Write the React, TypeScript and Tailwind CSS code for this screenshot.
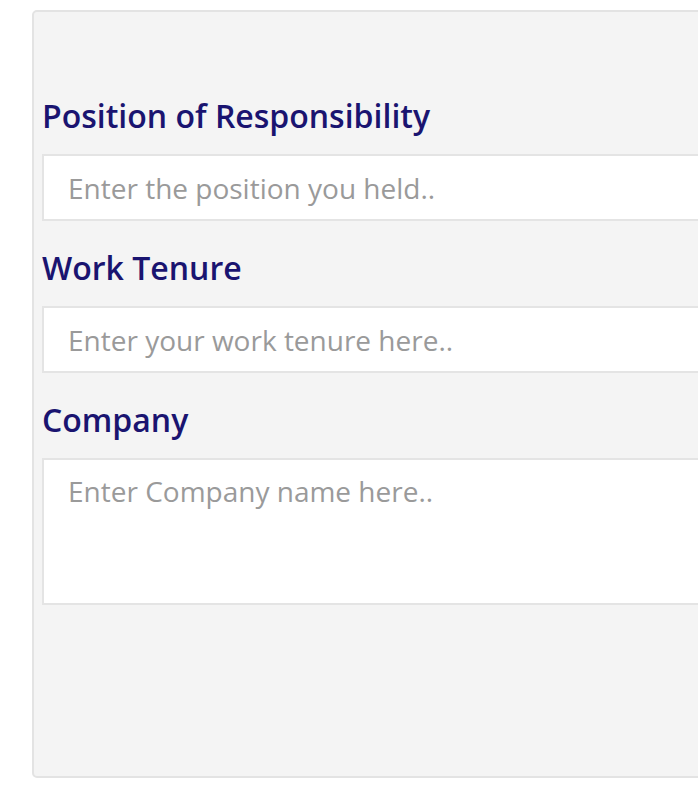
import React from "react";

const Field = ({ label, placeholder, area }: { label: string; placeholder: string; area?: boolean }) => (
  <div className="flex flex-col">
    <label className="text-[32px] leading-[44px] font-semibold text-[#1a1470] mt-[25px] mb-[16px]">
      {label}
    </label>
    {area ? (
      <textarea
        placeholder={placeholder}
        className="h-[147px] bg-white border-2 border-[#e4e4e4] px-[24px] py-[12px] text-[28px] leading-[38px] placeholder-[#9a9a9a] outline-none resize-none"
      />
    ) : (
      <input
        placeholder={placeholder}
        className="h-[67px] bg-white border-2 border-[#e4e4e4] px-[24px] text-[28px] placeholder-[#9a9a9a] outline-none"
      />
    )}
  </div>
);

export default function App() {
  return (
    <div className="w-[698px] h-[790px] overflow-hidden bg-white pt-[10px] pl-[32px]" style={{ fontFamily: '"Open Sans", sans-serif' }}>
      <div className="w-[760px] h-[768px] bg-[#f4f4f4] border-2 border-[#e3e3e3] rounded-[5px] pl-[8px] pt-[57px]">
        <Field label="Position of Responsibility" placeholder="Enter the position you held.." />
        <Field label="Work Tenure" placeholder="Enter your work tenure here.." />
        <Field label="Company" placeholder="Enter Company name here.." area />
      </div>
    </div>
  );
}
